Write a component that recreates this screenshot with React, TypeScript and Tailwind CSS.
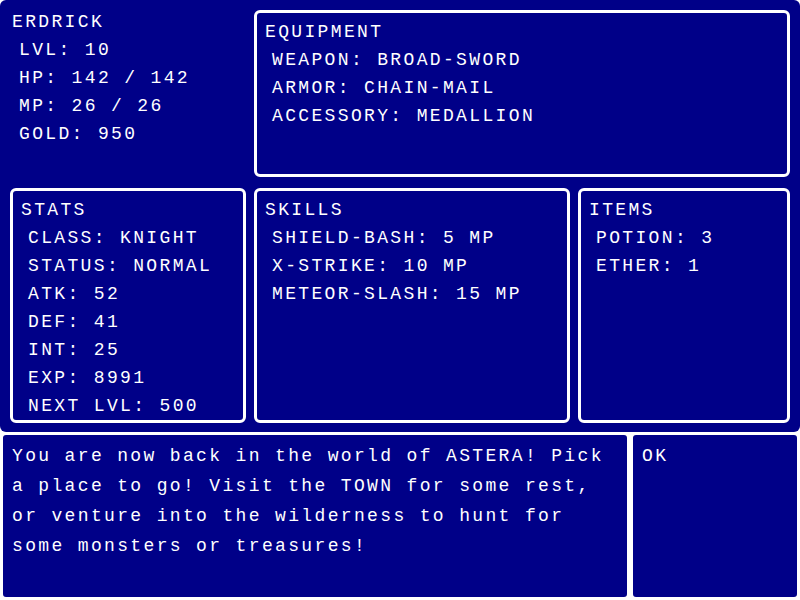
const hero = {
  name: "ERDRICK",
  lines: ["LVL: 10", "HP: 142 / 142", "MP: 26 / 26", "GOLD: 950"],
};

const equipment = ["WEAPON: BROAD-SWORD", "ARMOR: CHAIN-MAIL", "ACCESSORY: MEDALLION"];

const stats = [
  "CLASS: KNIGHT",
  "STATUS: NORMAL",
  "ATK: 52",
  "DEF: 41",
  "INT: 25",
  "EXP: 8991",
  "NEXT LVL: 500",
];

const skills = ["SHIELD-BASH: 5 MP", "X-STRIKE: 10 MP", "METEOR-SLASH: 15 MP"];

const items = ["POTION: 3", "ETHER: 1"];

function Window({ title, lines }: { title: string; lines: string[] }) {
  return (
    <div className="h-full rounded-[6px] border-[3px] border-white bg-[#000088] pl-[8px] pt-[5px]">
      <div>{title}</div>
      {lines.map((l) => (
        <div key={l} className="pl-[7px]">
          {l}
        </div>
      ))}
    </div>
  );
}

export default function App() {
  return (
    <div className="flex h-[600px] w-[800px] flex-col bg-white font-['Liberation_Mono',monospace] text-[18px] leading-[28px] tracking-[2.35px] text-white">
      {/* top status panel */}
      <div className="grid h-[432px] shrink-0 grid-cols-[236px_316px_212px] grid-rows-[167px_235px] gap-x-[8px] gap-y-[11px] rounded-[6px] bg-[#000088] px-[10px] pt-[10px]">
        <div className="-mt-[2px] pl-[2px]">
          <div>{hero.name}</div>
          {hero.lines.map((l) => (
            <div key={l} className="pl-[7px]">
              {l}
            </div>
          ))}
        </div>
        <div className="col-span-2">
          <Window title="EQUIPMENT" lines={equipment} />
        </div>
        <Window title="STATS" lines={stats} />
        <Window title="SKILLS" lines={skills} />
        <Window title="ITEMS" lines={items} />
      </div>

      {/* message row */}
      <div className="flex min-h-0 flex-1">
        <div className="w-[630px] rounded-[6px] border-[3px] border-white bg-[#000088] pl-[9px] pr-[16px] pt-[6px] leading-[30px]">
          You are now back in the world of ASTERA! Pick a place to go! Visit the TOWN for some rest, or
          venture into the wilderness to hunt for some monsters or treasures!
        </div>
        <div className="flex-1 rounded-[6px] border-[3px] border-white bg-[#000088] pl-[9px] pt-[6px] leading-[30px]">
          OK
        </div>
      </div>
    </div>
  );
}
